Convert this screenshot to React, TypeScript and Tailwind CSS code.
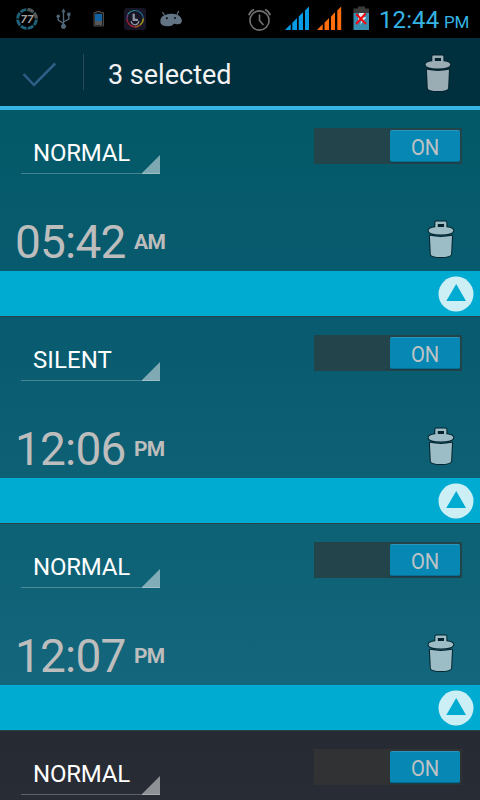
import React from "react";

const alarms = [
  { mode: "NORMAL", time: "05:42", half: "AM", selected: true, bg: "bg-linear-to-b from-[#035968] to-[#085b6e]" },
  { mode: "SILENT", time: "12:06", half: "PM", selected: true, bg: "bg-linear-to-b from-[#085b6e] to-[#0e6074]" },
  { mode: "NORMAL", time: "12:07", half: "PM", selected: true, bg: "bg-linear-to-b from-[#0d6174] to-[#13667c]" },
  { mode: "NORMAL", time: "", half: "", selected: false, bg: "bg-linear-to-b from-[#262a32] to-[#2c2f3a]" },
];

function Trash({ className, fill }: { className: string; fill: string }) {
  return (
    <svg className={className} width="30" height="40" viewBox="0 0 30 40" fill={fill}>
      <g stroke="#04222c" strokeWidth="2" strokeLinejoin="round">
        <path d="M3.9 16.8Q14.9 19 26 16.8L25.1 35.2Q24.8 38 14.9 38T4.8 35.2Z" />
        <path d="M9.3 9V3.8Q9.3 2.6 10.4 2.6H19.2Q20.4 2.6 20.4 3.8V9Z" />
        <path d="M9 8.2H21Q27.3 9 27.3 11.8Q26.5 15.6 14.9 15.6T2.5 11.8Q2.5 9 9 8.2Z" />
      </g>
      <path d="M3.9 16.8Q14.9 19 26 16.8L25.1 35.2Q24.8 38 14.9 38T4.8 35.2Z" />
      <path d="M9.3 9V3.8Q9.3 2.6 10.4 2.6H19.2Q20.4 2.6 20.4 3.8V9Z" />
      <path d="M9 8.2H21Q27.3 9 27.3 11.8Q26.5 15.6 14.9 15.6T2.5 11.8Q2.5 9 9 8.2Z" />
      <path d="M11.8 5H18V8H11.8Z" fill="#04222c" />
    </svg>
  );
}

function Ring() {
  return (
    <svg width="24" height="24" viewBox="0 0 24 24" className="ml-[15px] font-['Roboto',sans-serif]">
      <circle cx="12" cy="12" r="9.4" fill="none" stroke="#1f6178" strokeWidth="3" pathLength="80" strokeDasharray="8.4 1.6" transform="rotate(3 12 12)" />
      <path d="M12.7 2.6A9.4 9.4 0 0 1 18.3 5M19.4 6.3A9.4 9.4 0 0 1 21.4 11.5" fill="none" stroke="#555" strokeWidth="3" />
      <text x="12" y="16" textAnchor="middle" fontSize="11.5" fontWeight="700" fontStyle="italic" fill="#a0a0a0">77</text>
    </svg>
  );
}

function StatusBar() {
  return (
    <div className="flex h-[38px] items-center bg-black">
      <Ring />
      <svg className="ml-[17px]" width="16" height="22" viewBox="0 0 16 22" fill="#526777" stroke="#526777">
        <path d="M7.5 3V18M7.5 15.5L2.2 12.2V8.5M7.5 14L12.8 11V7" fill="none" strokeWidth="1.4" />
        <path d="M7.5 .8L9.2 4H5.8Z" strokeWidth=".5" />
        <circle cx="7.5" cy="18.4" r="2.1" />
        <circle cx="2.2" cy="8.3" r="1.3" />
        <path d="M11.3 4.8h3v2.8h-3z" strokeWidth=".3" />
      </svg>
      <svg className="ml-[21px]" width="12" height="18" viewBox="0 0 12 18">
        <path d="M3.5 1.5h4v1h3v13.5H1V2.5h2.5Z" fill="#17191b" stroke="#4b4945" />
        <path fill="#1261a0" d="M2 4h7v7H2z" />
        <path fill="#555759" d="M2 11h7v4H2z" />
      </svg>
      <svg className="-mt-px ml-[19px]" width="22" height="22" viewBox="0 0 22 22" fill="none">
        <rect width="22" height="22" rx="3" fill="#171627" />
        <path d="M4 6Q7 2.5 11 2.5" stroke="#308e99" strokeWidth="1.2" />
        <path d="M11 2.5A8.3 8.3 0 0 1 19.3 10.5" stroke="#246b95" strokeWidth="1.2" />
        <path d="M19.3 10.5A8.3 8.3 0 0 1 16 17" stroke="#a39a17" strokeWidth="1.4" />
        <path d="M16 17Q14 19 11 19" stroke="#a6511c" strokeWidth="1.4" />
        <path d="M11 19A8.3 8.3 0 0 1 3 11" stroke="#9a2039" strokeWidth="1.4" />
        <path d="M3 11Q2.9 8 4 6" stroke="#664280" strokeWidth="1.2" />
        <path d="M8.6 12V6Q9.8 5 10.8 6V10.5L14 11V13H8.6Z" fill="#9295a3" />
        <path d="M7 13.2Q8 16.8 11 16.8T15 13" stroke="#9295a3" strokeWidth="1.3" />
      </svg>
      <svg className="-mt-px ml-[14px]" width="22" height="20" viewBox="0 0 22 20">
        <path d="M4.5 6.5L2.5 3M17 5.5L18.7 2" stroke="#627384" strokeWidth="1.2" />
        <path fill="#627384" d="M.3 13Q0 8 4.5 6.2Q11 3.8 17.5 5.7Q21.8 8 21.9 12Q21.3 15.6 17 15.2L14 14.8Q12 17.5 8 17.3Q.8 17.3.3 13Z" />
        <circle cx="6.9" cy="9.3" r="1" fill="#080b0e" /><circle cx="15" cy="9" r="1" fill="#080b0e" />
      </svg>
      <svg className="ml-[66px]" width="24" height="24" viewBox="0 0 24 24" fill="none" stroke="#737373" strokeWidth="1.6">
        <circle cx="11.5" cy="13.5" r="9.6" />
        <path d="M11.5 7.5V13.5L15.5 18M.8 8.3Q2 4.3 6 2.6M17 2.6Q21 4.3 22.2 8.3" />
      </svg>
      <svg className="-mt-[3px] ml-[13px]" width="25" height="24" viewBox="0 0 25 24" fill="#079be5">
        <path d="M0 24L5.7 18.3V24ZM7.3 16.7L12 12V24H7.3ZM13.7 10.5L18 6.3V24H13.7ZM20 4.5L24 .5V24H20Z" />
      </svg>
      <svg className="-mt-[3px] ml-[7px]" width="25" height="24" viewBox="0 0 25 24" fill="#ff6d0c">
        <path d="M0 24L5.7 18.3V24ZM7.5 16.7L12 12V24H7.5ZM14 10.5L18 6.3V24H14ZM20.3 4.5L24.2 .5V24H20.3Z" />
      </svg>
      <svg className="-mt-[3px] ml-[11px]" width="17" height="24" viewBox="0 0 17 24">
        <path fill="#3b3b3b" d="M5 .5h7v2h4v5H.5v-5H5Z" />
        <path fill="#378eae" d="M.5 7h15.5v17H.5z" />
        <path fill="#dcebf0" d="M6.2 7h6l-2 4.2h3.2L7 19l1.7-5H5Z" />
        <path d="M3.2 8L13 18M12.6 7.5L3.2 18" stroke="#f40910" strokeWidth="2.1" />
      </svg>
      <span className="ml-[9px] w-[60px] pt-[3px] text-[24px] leading-[35px] tracking-[0.1px] text-[#34b4e4]">12:44</span>
      <span className="ml-[5px] pt-[7px] text-[17px] leading-[31px] tracking-[-0.1px] text-[#34b4e4]">PM</span>
    </div>
  );
}

function AlarmRow({ alarm }: { alarm: (typeof alarms)[number] }) {
  return (
    <section className="h-[207px]">
      <div className={`h-[161px] ${alarm.bg}`}>
        <div className="flex h-[110px] justify-between">
          <div className={`relative mt-[25px] ml-[21px] h-[39px] w-[139px] border-b border-white/25 pl-3 text-[24px] leading-[36px] text-white ${alarm.mode === "NORMAL" ? "tracking-[-0.2px]" : "tracking-[0.1px]"}`}>
            {alarm.mode}
            <svg className="absolute right-0 bottom-[-1px]" width="18" height="19" viewBox="0 0 18 19">
              <path d="M18 0V19H0V18Z" fill="white" fillOpacity=".48" />
            </svg>
          </div>
          <div className={`mt-[18px] mr-[18px] flex h-9 w-[148px] justify-end p-[2px] ${alarm.selected ? "bg-[#24444b]" : "bg-[#303234]"}`}>
            <div className="h-8 w-[70px] rounded-[2px] border-t border-b border-t-[#2b96bb] border-b-[#076f94] bg-[#0787b4] text-center text-[21.5px] leading-[33px] text-[#bfc3c5] shadow-[0_1px_1px_#143e4b]">
              <span className="inline-block scale-x-[0.94]">ON</span>
            </div>
          </div>
        </div>
        {alarm.selected && (
          <div className="flex h-[45px] items-center justify-between pr-[24px] pl-[15px] text-[#bdbdbd]">
            <div className="flex items-center">
              <span className="w-[112px] text-[46px] leading-[45px] tracking-[-0.8px]">{alarm.time}</span>
              <span className="ml-[7px] text-[21px] leading-[45px] font-bold tracking-[-0.7px]">{alarm.half}</span>
            </div>
            <Trash className="-mt-[8px]" fill="#9cbdc5" />
          </div>
        )}
      </div>
      <div className="flex h-[45px] items-center justify-end bg-[#00abd1] pr-[6px]">
        <svg width="36" height="36" viewBox="0 0 36 36">
          <circle cx="18" cy="18" r="17.5" fill="#cceff6" />
          <path d="M18.2 8L28 25H8.3Z" fill="#00abd1" />
        </svg>
      </div>
      <div className="h-px bg-[#29434c]" />
    </section>
  );
}

export default function App() {
  return (
    <main className="h-[800px] w-[480px] overflow-hidden bg-[#262a32] font-['Roboto',sans-serif]">
      <StatusBar />
      <header className="flex h-[72px] items-center border-b-4 border-[#34b5e5] bg-[#002f3e]">
        <svg className="mt-[5px] ml-[22px]" width="35" height="28" viewBox="0 0 35 28" fill="none" stroke="#2d5f86" strokeWidth="2.5">
          <path d="M1.5 13L12 24L33.2 2.5" />
        </svg>
        <div className="ml-[26px] h-9 w-px bg-[#284b58]" />
        <h1 className="ml-[24px] pt-[5px] text-[27px] leading-[36px] text-[#f3f3f3]">3 selected</h1>
        <Trash className="mt-[2px] mr-[27px] ml-auto" fill="#9aadb4" />
      </header>
      {alarms.map((alarm, i) => <AlarmRow alarm={alarm} key={i} />)}
    </main>
  );
}
